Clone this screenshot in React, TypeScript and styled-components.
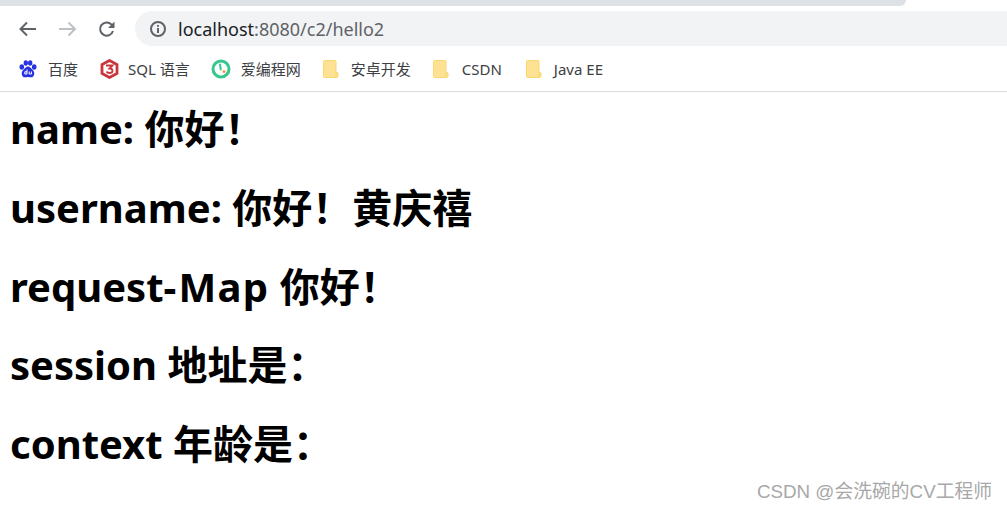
import React from 'react';
import styled, { createGlobalStyle } from 'styled-components';

const GlobalStyle = createGlobalStyle`
  html, body {
    margin: 0;
    padding: 0;
    background: #fff;
    overflow: hidden;
  }
`;

const Page = styled.div`
  position: relative;
  width: 1007px;
  height: 511px;
  overflow: hidden;
  font-family: "Noto Sans", "Noto Sans CJK SC", sans-serif;
`;

const TabStrip = styled.div`
  height: 6px;
  width: 906px;
  background: #dee1e6;
  border-bottom-right-radius: 6px;
`;

const Toolbar = styled.div`
  display: flex;
  align-items: center;
  height: 35px;
  margin-top: 5px;
  padding-left: 17px;
`;

const NavButton = styled.button`
  width: 20px;
  height: 20px;
  padding: 0;
  margin-right: 20px;
  border: 0;
  background: none;
  display: flex;
  align-items: center;
  justify-content: center;
`;

const AddressBar = styled.div`
  flex: 1;
  height: 35px;
  margin-left: -2px;
  display: flex;
  align-items: center;
  gap: 11px;
  padding-left: 14px;
  background: #f1f3f4;
  border-radius: 18px 0 0 18px;
  font-size: 18px;
  color: #5f6368;
`;

const Host = styled.span`
  color: #202124;
`;

const BookmarkBar = styled.div`
  display: flex;
  align-items: center;
  height: 45px;
  padding-left: 19px;
  border-bottom: 1px solid #dadce0;
`;

const Bookmark = styled.div<{ $gap: number; $after?: number }>`
  display: flex;
  align-items: center;
  gap: ${(p) => p.$gap}px;
  margin-right: ${(p) => p.$after ?? 22}px;
  font-size: 15px;
  color: #3c4043;
  white-space: nowrap;
`;

const Content = styled.main`
  padding: 10px 0 0 10px;
`;

const Line = styled.h1`
  margin: 0 0 24.75px;
  height: 54px;
  line-height: 54px;
  font-size: 40px;
  font-weight: 700;
  color: #000;
  white-space: pre;
`;

const Hyphen = styled.span`
  padding-right: 2px;
`;

const WideWord = styled.span`
  letter-spacing: 1.3px;
`;

const Watermark = styled.div`
  position: absolute;
  right: 15px;
  bottom: 8px;
  font-family: "Liberation Sans", "Noto Sans CJK SC", sans-serif;
  font-size: 18.8px;
  color: #a8a8a8;
`;

const Folder = () => (
  <svg width="16" height="18" viewBox="0 0 16 18">
    <path
      d="M1.500.5h10.500a1 1 0 0 1 1 1V12.500h1a1 1 0 0 1 1 1V16a1.500 1.500 0 0 1-1.500 1.500H1.500a1 1 0 0 1-1-1v-15a1 1 0 0 1 1-1z"
      fill="#fde293"
      stroke="#f9d86f"
    />
    <path d="M13 17v-4" fill="none" stroke="#f9d86f" />
  </svg>
);

const App: React.FC = () => {
  return (
    <Page>
      <GlobalStyle />
      <TabStrip />
      <Toolbar>
        <NavButton>
          <svg width="20" height="20" viewBox="0 0 20 20" fill="none" stroke="#5f6368" strokeWidth="2">
            <path d="M19 10H3.500M10 3.500L3.500 10l6.500 6.500" />
          </svg>
        </NavButton>
        <NavButton>
          <svg width="20" height="20" viewBox="0 0 20 20" fill="none" stroke="#bdc1c6" strokeWidth="2">
            <path d="M2 10h16M11.500 3.500L18 10l-6.500 6.500" />
          </svg>
        </NavButton>
        <NavButton>
          <svg width="20" height="20" viewBox="0 0 20 20" fill="none">
            <path d="M16 12a6.600 6.600 0 1 1-1.600-6.600L16.500 7.500" stroke="#5f6368" strokeWidth="2" />
            <path d="M17.500 2.500v6.500H11z" fill="#5f6368" />
          </svg>
        </NavButton>
        <AddressBar>
          <svg width="18" height="18" viewBox="0 0 18 18" fill="none" stroke="#5f6368">
            <circle cx="9" cy="9" r="7" strokeWidth="2" />
            <path d="M9 8v5M9 5v1.800" strokeWidth="2" />
          </svg>
          <span>
            <Host>localhost</Host>:8080/c2/hello2
          </span>
        </AddressBar>
      </Toolbar>
      <BookmarkBar>
        <Bookmark $gap={11}>
          <svg width="18" height="18" viewBox="0 0 18 18" fill="#2932e1">
            <ellipse cx="2.800" cy="7" rx="2.300" ry="2.700" />
            <ellipse cx="6.800" cy="3" rx="2.200" ry="2.800" />
            <ellipse cx="11.200" cy="3" rx="2.200" ry="2.800" />
            <ellipse cx="15.200" cy="7" rx="2.300" ry="2.700" />
            <path d="M9 6.500c2.200 0 3 2 4.800 3.400 2.500 2 1.800 7.400-1.800 7.400-1.200 0-2-.4-3-.4s-1.800.4-3 .4c-3.600 0-4.300-5.400-1.800-7.400C6 8.500 6.800 6.500 9 6.500z" />
            <path d="M8 9.500v4.500H5.800v-2.200H8M10.200 11.500V14h2.200v-2.500" fill="none" stroke="#fff" strokeWidth="1" />
          </svg>
          百度
        </Bookmark>
        <Bookmark $gap={9} $after={21}>
          <svg width="19" height="20" viewBox="0 0 19 20" fill="none" stroke="#c9353a" strokeWidth="2.800">
            <path d="M9.500 1.500l7.500 4v9l-7.500 4-7.500-4v-9z" />
            <path d="M6 6.500h6.500l-3 3c2 0 3 1 3 2.200 0 1.500-1.500 2.300-3 2.300-1.300 0-2.500-.6-3-1.500" strokeWidth="1.800" />
          </svg>
          SQL 语言
        </Bookmark>
        <Bookmark $gap={10}>
          <svg width="20" height="20" viewBox="0 0 20 20" fill="none">
            <circle cx="10" cy="10" r="8" stroke="#35c78d" strokeWidth="3" />
            <path d="M9 5.500l.8 5" stroke="#35c78d" strokeWidth="2" strokeLinecap="round" />
            <circle cx="13" cy="12.500" r="1.500" fill="#f59a3c" />
          </svg>
          爱编程网
        </Bookmark>
        <Bookmark $gap={12}>
          <Folder />
          安卓开发
        </Bookmark>
        <Bookmark $gap={13} $after={24}>
          <Folder />
          CSDN
        </Bookmark>
        <Bookmark $gap={12}>
          <Folder />
          Java EE
        </Bookmark>
      </BookmarkBar>
      <Content>
        <Line>name: 你好！</Line>
        <Line>username: 你好！黄庆禧</Line>
        <Line>
          request<Hyphen>-</Hyphen>
          <WideWord>Map</WideWord> 你好！
        </Line>
        <Line>session 地址是：</Line>
        <Line>context 年龄是：</Line>
      </Content>
      <Watermark>CSDN @会洗碗的CV工程师</Watermark>
    </Page>
  );
};

export default App;
